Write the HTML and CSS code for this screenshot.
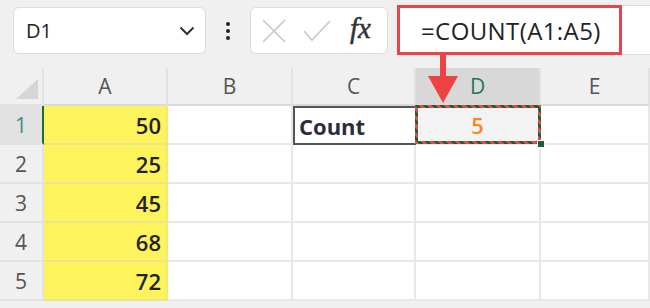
FILE: index.html
```html
<!DOCTYPE html>
<html lang="en">
<head>
    <meta charset="UTF-8">
    <title>COUNT example</title>
    <link rel="stylesheet" href="styles.css">
</head>
<body>
    <div class="sheet">
        <div class="toolbar">
            <div class="name-box">
                <span class="name-text">D1</span>
                <svg class="chevron" width="16" height="10" viewBox="0 0 16 10">
                    <path d="M1.5 1.5 L8 8 L14.5 1.5" fill="none" stroke="#333" stroke-width="2"/>
                </svg>
            </div>
            <div class="grip"><i></i><i></i><i></i></div>
            <div class="fx-box">
                <svg width="26" height="26" viewBox="0 0 26 26">
                    <path d="M2 2 L24 24 M24 2 L2 24" stroke="#c8c8c8" stroke-width="1.6" fill="none"/>
                </svg>
                <svg width="28" height="22" viewBox="0 0 28 22">
                    <path d="M1 11 L9 20 L27 1" stroke="#c8c8c8" stroke-width="1.6" fill="none"/>
                </svg>
                <span class="fx">fx</span>
            </div>
            <div class="formula-bar">
                <span class="formula">=COUNT(A1:A5)</span>
            </div>
        </div>

        <div class="grid">
            <div class="corner"></div>
            <div class="col-head">A</div>
            <div class="col-head">B</div>
            <div class="col-head">C</div>
            <div class="col-head active">D</div>
            <div class="col-head">E</div>

            <div class="row-head active">1</div>
            <div class="cell num yellow">50</div>
            <div class="cell"></div>
            <div class="cell label">Count</div>
            <div class="cell result">5<span class="handle"></span></div>
            <div class="cell"></div>

            <div class="row-head">2</div>
            <div class="cell num yellow">25</div>
            <div class="cell"></div>
            <div class="cell"></div>
            <div class="cell"></div>
            <div class="cell"></div>

            <div class="row-head">3</div>
            <div class="cell num yellow">45</div>
            <div class="cell"></div>
            <div class="cell"></div>
            <div class="cell"></div>
            <div class="cell"></div>

            <div class="row-head">4</div>
            <div class="cell num yellow">68</div>
            <div class="cell"></div>
            <div class="cell"></div>
            <div class="cell"></div>
            <div class="cell"></div>

            <div class="row-head">5</div>
            <div class="cell num yellow">72</div>
            <div class="cell"></div>
            <div class="cell"></div>
            <div class="cell"></div>
            <div class="cell"></div>
        </div>

        <!-- arrow from the formula down to D1 -->
        <svg class="arrow" width="34" height="50" viewBox="0 0 34 50">
            <rect x="14" y="0" width="6" height="23" fill="#ee4343"/>
            <path d="M2 21 L32 21 L17 48 Z" fill="#ee4343"/>
        </svg>
    </div>
</body>
</html>
```

FILE: styles.css
```css
* {
    box-sizing: border-box;
}
body {
    margin: 0;
    background: #f0f0f0;
    font-family: "Open Sans", "Noto Sans", sans-serif;
}
.sheet {
    position: relative;
    width: 650px;
    height: 308px;
    overflow: hidden;
}
.toolbar {
    height: 68px;
    display: flex;
    align-items: flex-start;
    padding: 7px 0 0 13px;
}
.name-box {
    width: 193px;
    height: 47px;
    background: #fff;
    border: 1px solid #dcdcdc;
    border-radius: 6px;
    display: flex;
    align-items: center;
    justify-content: space-between;
    padding: 0 10px 0 12px;
}
.name-text {
    font-size: 20px;
    color: #222;
}
.grip {
    width: 44px;
    height: 47px;
    display: flex;
    flex-direction: column;
    align-items: center;
    justify-content: center;
    gap: 3px;
}
.grip i {
    width: 4px;
    height: 4px;
    border-radius: 50%;
    background: #222;
}
.fx-box {
    width: 138px;
    height: 47px;
    background: #fff;
    border: 1px solid #dcdcdc;
    border-radius: 6px;
    display: flex;
    align-items: center;
    padding: 0 10px 0 10px;
    gap: 16px;
}
.fx {
    font-family: "Liberation Serif", serif;
    font-style: italic;
    font-size: 29px;
    color: #333;
    margin-left: 3px;
    margin-top: -4px;
    -webkit-text-stroke: 0.5px #333;
}
.formula-bar {
    flex: 1;
    height: 50px;
    margin: -2px 0 0 9px;
    background: #fff;
    border: 1px solid #dcdcdc;
    border-right: none;
}
.formula {
    display: flex;
    align-items: center;
    width: 225px;
    height: 50px;
    margin: -1px 0 0 -1px;
    padding-left: 21px;
    border: 3px solid #e8454a;
    font-size: 24px;
    letter-spacing: 0.4px;
    color: #222;
}
.grid {
    display: grid;
    grid-template-columns: 44px 124px 125px 123px 125px 1fr;
    grid-template-rows: 38px repeat(5, 39px);
}
.corner {
    background: #f0f0f0;
    border-right: 2px solid #e2e2e2;
    border-bottom: 2px solid #e2e2e2;
    position: relative;
}
.corner::after {
    content: "";
    position: absolute;
    right: 4px;
    bottom: 5px;
    border-left: 22px solid transparent;
    border-bottom: 20px solid #d6d6d6;
}
.col-head {
    display: flex;
    align-items: center;
    justify-content: center;
    background: #f0f0f0;
    border-right: 2px solid #e2e2e2;
    border-bottom: 2px solid #dadada;
    font-size: 21px;
    color: #555;
}
.col-head.active {
    background: #d8d8d8;
    color: #1f7a52;
}
.row-head {
    display: flex;
    align-items: center;
    justify-content: center;
    background: #f0f0f0;
    border-right: 2px solid #e2e2e2;
    border-bottom: 2px solid #e2e2e2;
    font-size: 21px;
    color: #555;
}
.row-head.active {
    background: #e2e2e2;
    color: #3a8f8f;
    border-right-color: #1e6b3a;
}
.cell {
    background: #fff;
    border-right: 2px solid #e8e8e8;
    border-bottom: 2px solid #e8e8e8;
    display: flex;
    align-items: center;
    font-size: 22px;
    font-weight: 600;
    color: #222;
}
.yellow {
    background: #fdf35c;
    border-right-color: #f2ea70;
    border-bottom-color: #ebe48e;
}
.num {
    justify-content: flex-end;
    padding-right: 5px;
}
.label {
    padding-left: 4px;
    border: 2px solid #555;
    border-right: none;
    font-weight: 700;
    color: #2c2c3a;
}
.result {
    position: relative;
    justify-content: center;
    background: #f3f3f3;
    color: #f28b22;
}
.result::before {
    content: "";
    position: absolute;
    inset: -1px -2px -1px -1px;
    border: 3px solid transparent;
    border-image: repeating-linear-gradient(45deg, #df4b4b 0 3px, #1e5e34 3px 6px) 3;
}
.handle {
    position: absolute;
    right: -6px;
    bottom: -5px;
    width: 8px;
    height: 8px;
    background: #1e5e34;
    border: 1px solid #fff;
}
.arrow {
    position: absolute;
    left: 426px;
    top: 55px;
}
```
